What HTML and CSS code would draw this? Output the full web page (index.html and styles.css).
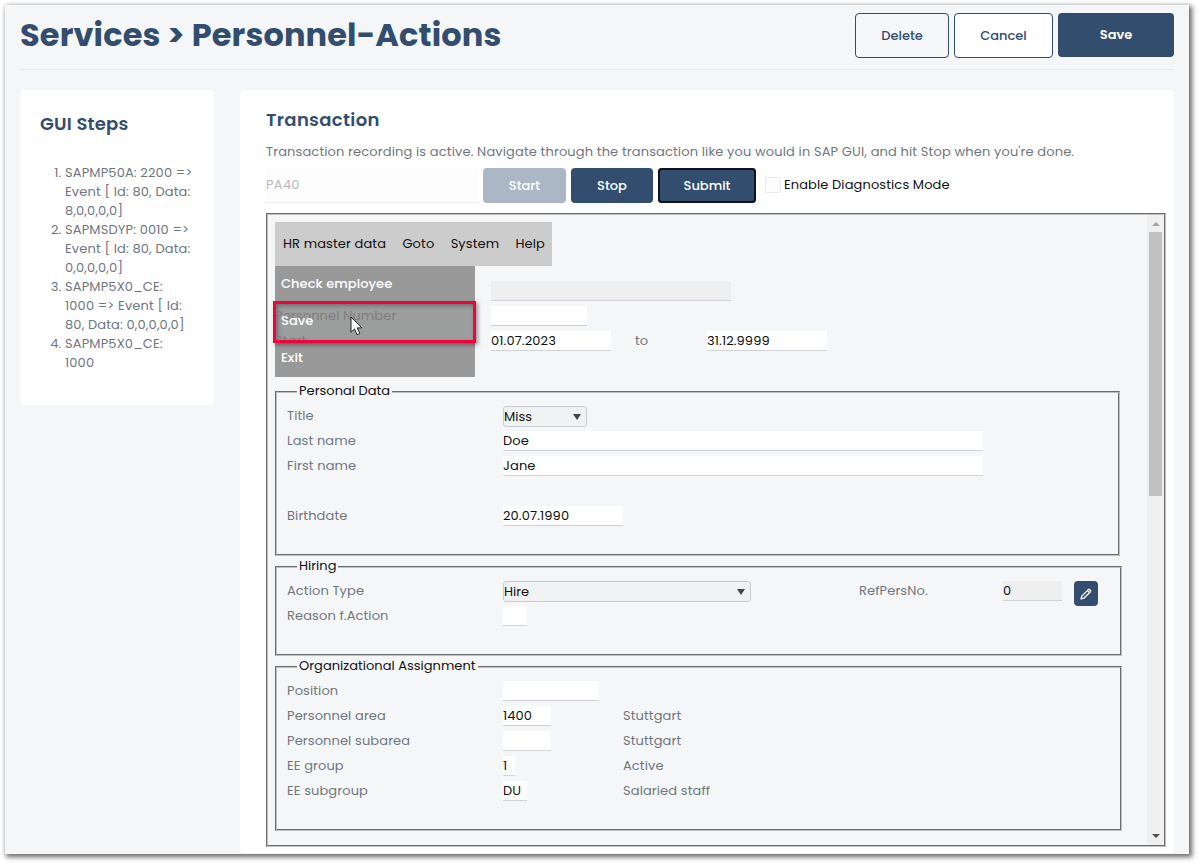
FILE: index.html
```html
<!DOCTYPE html>
<html lang="en">
<head>
<meta charset="utf-8">
<title>Services &gt; Personnel-Actions</title>
<link rel="stylesheet" href="styles.css">
</head>
<body>
<div class="window">
  <header class="top">
    <h1>Services &gt; Personnel-Actions</h1>
    <div class="actions">
      <button class="btn outline delete">Delete</button>
      <button class="btn outline cancel">Cancel</button>
      <button class="btn solid save">Save</button>
    </div>
  </header>
  <div class="columns">
    <aside class="card steps">
      <h2>GUI Steps</h2>
      <ol>
        <li>SAPMP50A: 2200 =&gt;<br>Event [ Id: 80, Data:<br>8,0,0,0,0]</li>
        <li>SAPMSDYP: 0010 =&gt;<br>Event [ Id: 80, Data:<br>0,0,0,0,0]</li>
        <li>SAPMP5X0_CE:<br>1000 =&gt; Event [ Id:<br>80, Data: 0,0,0,0,0]</li>
        <li>SAPMP5X0_CE:<br>1000</li>
      </ol>
    </aside>
    <main class="card transaction">
      <h2>Transaction</h2>
      <p class="hint">Transaction recording is active. Navigate through the transaction like you would in SAP GUI, and hit Stop when you're done.</p>
      <div class="controls">
        <div class="code">PA40</div>
        <button class="btn solid start">Start</button>
        <button class="btn solid stop">Stop</button>
        <button class="btn solid submit">Submit</button>
        <label class="diag"><span class="box"></span><span>Enable Diagnostics Mode</span></label>
      </div>
      <div class="frame">
        <div class="screen">
          <nav class="menubar">
            <span>HR master data</span><span>Goto</span><span>System</span><span>Help</span>
            <div class="dropdown">
              <div class="item">Check employee</div>
              <div class="item"></div>
              <div class="item">Exit</div>
              <div class="marker">
                <span class="ghost g1">Personnel Number</span>
                <span class="ghost g2">Start</span>
                <span class="label">Save</span>
                <svg class="cursor" width="13" height="20" viewBox="0 0 13 20"><path d="M1 1v15.2l3.5-3.3 2.6 5.8 2.7-1.2-2.6-5.6h4.6z" fill="#fff" stroke="#222" stroke-width="1"/></svg>
              </div>
            </div>
          </nav>
          <div class="grid head">
            <span></span><div class="in off w240"></div><span></span><span></span>
            <span></span><div class="in w96"></div><span></span><span></span>
            <span></span><div class="in w120">01.07.2023</div><span>to</span><div class="in w120">31.12.9999</div>
          </div>
          <fieldset class="personal">
            <legend>Personal Data</legend>
            <div class="grid two">
              <span>Title</span><div class="sel w84">Miss<i></i></div>
              <span>Last name</span><div class="in w480">Doe</div>
              <span>First name</span><div class="in w480">Jane</div>
              <span></span><span></span>
              <span>Birthdate</span><div class="in w120">20.07.1990</div>
            </div>
          </fieldset>
          <fieldset class="hiring">
            <legend>Hiring</legend>
            <div class="grid five">
              <span>Action Type</span><div class="sel w248">Hire<i></i></div><span>RefPersNo.</span><div class="in off w59">0</div>
              <button class="edit"><svg width="12" height="12" viewBox="0 0 14 14" fill="none" stroke="#fff" stroke-width="1.5" stroke-linejoin="round"><path d="M1.2 12.8l.9-3.3 7.6-7.6q.8-.8 1.6 0l.8.8q.8.8 0 1.6l-7.6 7.6zM8.6 3l2.4 2.4"/></svg></button>
              <span>Reason f.Action</span><div class="in w24"></div>
            </div>
          </fieldset>
          <fieldset class="org">
            <legend>Organizational Assignment</legend>
            <div class="grid three">
              <span>Position</span><div class="in w96"></div><span></span>
              <span>Personnel area</span><div class="in w48">1400</div><span>Stuttgart</span>
              <span>Personnel subarea</span><div class="in w48"></div><span>Stuttgart</span>
              <span>EE group</span><div class="in w12">1</div><span>Active</span>
              <span>EE subgroup</span><div class="in w24">DU</div><span>Salaried staff</span>
            </div>
          </fieldset>
        </div>
        <div class="scrollbar"><i class="up"></i><b></b><i class="down"></i></div>
      </div>
    </main>
  </div>
</div>
</body>
</html>
```
FILE: styles.css
```css
* { box-sizing: border-box; }
body { margin: 0; padding: 5px; height: 863px; overflow: hidden; background: #fff; font: 13px/20px Poppins, Inter, "Open Sans", sans-serif; color: #70767e; letter-spacing: .11px; }
h1, h2, p, ol, fieldset, button { margin: 0; padding: 0; font-family: inherit; }
.window { width: 1184px; height: 849px; padding: 0 15px; background: #f4f6f8; box-shadow: 2px 2px 5px 1px rgba(0,0,0,.6); overflow: hidden; }
.top { height: 65px; display: flex; justify-content: space-between; border-bottom: 1px solid #e9ebed; }
h1 { margin-top: 8px; font-size: 32px; line-height: 44px; font-weight: 700; letter-spacing: .12px; color: #324d6e; white-space: nowrap; }
.actions { display: flex; align-items: flex-start; gap: 5px; padding-top: 8px; }
.btn { border: 0; border-radius: 4px; font-size: 13px; line-height: 20px; text-align: center; letter-spacing: 0; }
.outline { height: 45px; border: 1px solid #324d6e; color: #324d6e; background: #f4f6f8; font-weight: 500; }
.delete { width: 94px; }
.cancel { width: 99px; background: #fff; }
.solid { background: #324d6e; color: #fff; font-weight: 600; }
.save { width: 116px; height: 44px; }
.columns { display: flex; align-items: flex-start; gap: 26px; padding-top: 20px; }
.card { background: #fff; border-radius: 4px; }
h2 { font-size: 18px; line-height: 26px; font-weight: 600; letter-spacing: .2px; color: #324d6e; }
.steps { width: 194px; height: 315px; padding: 21px 0 0 20px; }
.steps ol { margin-top: 26px; padding-left: 25px; line-height: 19px; letter-spacing: .14px; white-space: nowrap; }
.transaction { width: 934px; height: 763px; padding: 17px 8px 0 26px; }
.transaction h2 { letter-spacing: .34px; }
.hint { margin-top: 9px; line-height: 20px; letter-spacing: .135px; white-space: nowrap; }
.controls { margin-top: 6px; height: 35px; display: flex; gap: 5px; }
.code { width: 212px; border-bottom: 1px solid #ebebeb; background: #fdfdfd; line-height: 33px; color: #b9bbbd; letter-spacing: .3px; }
.controls .btn { height: 35px; font-weight: 500; }
.controls .start { width: 83px; background: #abb7c5; }
.stop { width: 82px; }
.submit { width: 98px; outline: 2px solid #101418; outline-offset: -2px; }
.diag { display: flex; align-items: center; gap: 3px; padding-left: 4px; height: 33px; color: #111; letter-spacing: .11px; }
.box { width: 16px; height: 16px; border: 1px solid #e9e9e9; border-radius: 2px; background: #fdfdfd; }
.frame { margin-top: 10px; height: 634px; border: 2px groove #c0c0c0; background: #f4f6f8; display: flex; justify-content: space-between; }
.screen { padding: 7px 0 0 7px; width: 860px; }
.menubar { position: relative; width: 277px; height: 44px; padding: 0 7px 0 8px; background: #ccc; color: #111; display: flex; justify-content: space-between; align-items: center; white-space: nowrap; }
.dropdown { position: absolute; left: 0; top: 44px; width: 200px; background: #999; color: #fff; font-weight: 500; letter-spacing: .05px; }
.item { height: 37px; padding-left: 6px; line-height: 36px; }
.marker { position: absolute; left: -2px; top: 35px; width: 203px; height: 42px; border: 3px solid #f6003c; background: #9c9e9d; box-shadow: 2px 2px 4px rgba(0,0,0,.4), inset 2px 2px 4px rgba(0,0,0,.3); overflow: hidden; }
.marker > * { position: absolute; }
.ghost { color: #7c7e80; font-weight: 400; letter-spacing: .12px; left: -1px; }
.g1 { top: 2px; }
.g2 { top: 27px; }
.label { left: 5px; top: 7px; }
.cursor { left: 74px; top: 12px; }
.grid { display: grid; grid-auto-rows: 25px; white-space: nowrap; }
.head { margin: 15px 0 26px; grid-template-columns: 216px 144px 72px 1fr; }
.two { grid-template-columns: 216px 1fr; }
.three { grid-template-columns: 216px 120px 1fr; }
.five { grid-template-columns: 216px 356px 144px 71px 1fr; }
.in { height: 20px; border-bottom: 1px solid #d0d4d9; background: #fff; color: #111; line-height: 19px; }
.off { background: #efefef; }
.w12 { width: 12px; } .w24 { width: 24px; } .w48 { width: 48px; } .w59 { width: 59px; } .w84 { width: 84px; }
.w96 { width: 96px; } .w120 { width: 120px; } .w240 { width: 240px; } .w248 { width: 248px; } .w480 { width: 480px; }
.sel { display: flex; justify-content: space-between; align-items: center; height: 21px; padding: 0 5px 0 0; border: 1px solid #c9cacb; border-radius: 3px; background: #f1f2f4; color: #111; line-height: 19px; letter-spacing: 0; }
.sel i { border: 4px solid transparent; border-top: 6px solid #444; border-bottom: 0; }
fieldset { border: 2px groove #c0c0c0; padding: 4px 0 0 10px; width: 847px; height: 174px; margin-bottom: 1px; }
.personal { width: 845px; }
.hiring { height: 99px; }
legend { margin-left: 10px; padding: 0 2px; height: 20px; line-height: 18px; color: #111; letter-spacing: .02px; white-space: nowrap; }
.edit { width: 24px; height: 25px; border: 0; border-radius: 4px; background: #324d6e; display: flex; align-items: center; justify-content: center; }
.scrollbar { width: 17px; background: #f0f0f0; display: flex; flex-direction: column; align-items: center; }
.scrollbar b { width: 13px; height: 264px; background: #c1c1c1; }
.up { margin: 7px 0 6px; border: 4px solid transparent; border-top: 0; border-bottom: 4px solid #a3a3a3; }
.down { margin: auto 0 7px; border: 4px solid transparent; border-bottom: 0; border-top: 4px solid #505050; }
```
